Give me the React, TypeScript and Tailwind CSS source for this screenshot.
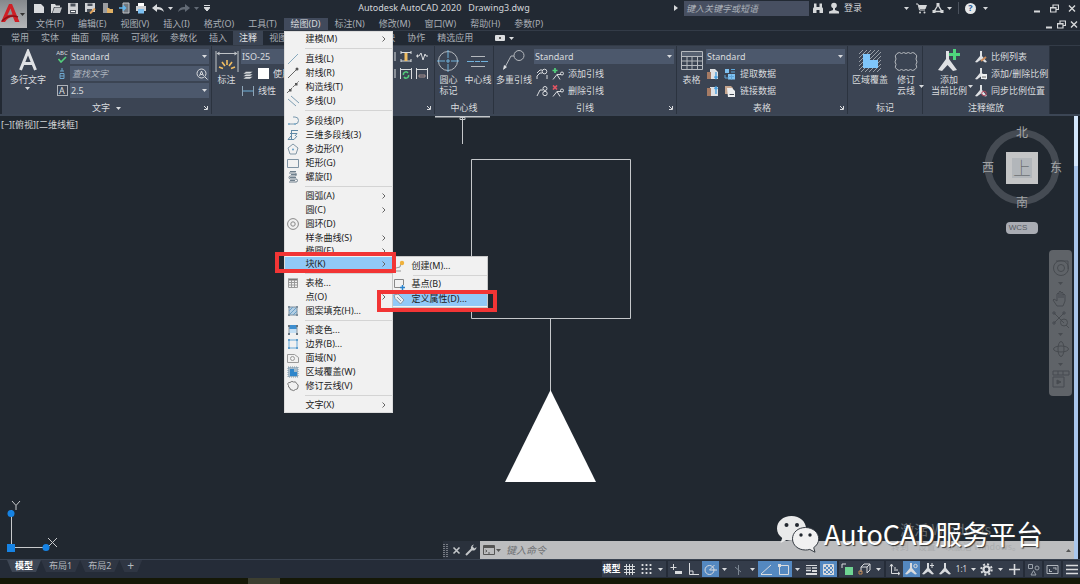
import { Fragment } from "react";
import type { ReactNode } from "react";

type IconProps = { w?: number; h?: number; children: ReactNode; className?: string };

function Icon({ w = 12, h = 12, children, className = "" }: IconProps) {
  return (
    <svg
      width={w}
      height={h}
      viewBox={`0 0 ${w} ${h}`}
      fill="none"
      stroke="currentColor"
      aria-hidden="true"
      className={`shrink-0 ${className}`}
    >
      {children}
    </svg>
  );
}

function Caret({ className = "" }: { className?: string }) {
  return (
    <Icon w={5} h={3} className={className}>
      <path d="M0 0h5L2.5 3z" fill="currentColor" stroke="none" />
    </Icon>
  );
}

/* ---------- Title bar ---------- */

const quickAccess: { label: string; icon: ReactNode }[] = [
  { label: "新建", icon: <path d="M1 2h7l3 3v6H1z" fill="#d9dbde" stroke="none" /> },
  {
    label: "打开",
    icon: (
      <>
        <path d="M1 2h4l1 1.500h4V5H4l-2 6H1z" fill="#d9dbde" stroke="none" />
        <path d="M4.500 5.500H12L10 11H2.500z" fill="#c2c5c9" stroke="none" />
      </>
    ),
  },
  {
    label: "保存",
    icon: (
      <>
        <path d="M1 1h10v11H1z" fill="#d0d2d5" stroke="none" />
        <path d="M3.500 1.500h5v3h-5zM3 8h6v3.500H3z" fill="#4c525c" stroke="none" />
        <path d="M4 9.500h4" stroke="#fff" />
      </>
    ),
  },
  {
    label: "另存为",
    icon: (
      <>
        <path d="M1 1h10v9H1z" fill="#d0d2d5" stroke="none" />
        <path d="M3.500 1.500h5v2.500h-5zM3 7h5v3H3z" fill="#4c525c" stroke="none" />
        <path d="M6 11.500l5-5" stroke="#e0a25a" strokeWidth="2" />
      </>
    ),
  },
  {
    label: "从 Web 打开",
    icon: (
      <>
        <path d="M2 1h5v10H2z" fill="#9b9da0" stroke="none" />
        <path d="M6 6h2l1 1h3v4H6z" fill="#e0b064" stroke="none" />
      </>
    ),
  },
  {
    label: "保存到移动设备",
    icon: (
      <>
        <path d="M5 1h6v10H5z" fill="#70777f" stroke="#c0c3c7" />
        <path d="M1 6h6M5 3.500L7.500 6 5 8.500" stroke="#5fb5ee" strokeWidth="1.500" />
      </>
    ),
  },
  {
    label: "打印",
    icon: (
      <>
        <path d="M3 1h6v3H3z" fill="#fff" stroke="none" />
        <path d="M1 4h10v5H1z" fill="#cfd1d4" stroke="none" />
        <path d="M3 7h6v4.500H3z" fill="#7cc0f2" stroke="none" />
      </>
    ),
  },
];

function WindowButtons({ className }: { className: string }) {
  return (
    <div className={`flex items-center text-[#d6d8da] ${className}`}>
      <button aria-label="最小化">
        <Icon w={8} h={9}>
          <path d="M1 7.500h6" strokeWidth="2" />
        </Icon>
      </button>
      <button aria-label="还原">
        <Icon w={9} h={9}>
          <path d="M3 3V1h5.500v4.500H6.500M.5 3.500h5.500V8H.5zM.5 4h5.500" strokeWidth="1.200" />
        </Icon>
      </button>
      <button aria-label="关闭">
        <Icon w={8} h={9}>
          <path d="M1 1.500l6 6M7 1.500l-6 6" strokeWidth="1.400" />
        </Icon>
      </button>
    </div>
  );
}

function TitleBar() {
  return (
    <div className="flex h-4 items-center pr-1">
      <div className="flex items-center gap-[5px] pl-1.5">
        {quickAccess.map((q) => (
          <button key={q.label} aria-label={q.label}>
            <Icon>{q.icon}</Icon>
          </button>
        ))}
        <button aria-label="放弃" className="flex items-center gap-1 text-[#d9dbde]">
          <Icon>
            <path d="M0 6l5-4v3c4 0 6 1 7 5-2-2-4-2.500-7-2.500V10z" fill="currentColor" stroke="none" />
          </Icon>
          <Caret />
        </button>
        <button aria-label="重做" className="flex items-center gap-1 text-[#626a75]">
          <Icon>
            <path d="M12 6L7 2v3C3 5 1 6 0 10c2-2 4-2.500 7-2.500V10z" fill="currentColor" stroke="none" />
          </Icon>
          <Caret />
        </button>
        <button aria-label="自定义快速访问工具栏" className="text-[#d9dbde]">
          <Icon w={6} h={6}>
            <path d="M0 .5h6M0 2.500h6L3 6z" fill="currentColor" />
          </Icon>
        </button>
      </div>

      <h1 className="flex-1 pl-1 text-center whitespace-pre text-[#d3d6d9]">
        Autodesk AutoCAD 2020{"   "}Drawing3.dwg
      </h1>

      <div className="flex items-center text-[#d6d8da]">
        <Icon w={4} h={6} className="mr-1.5">
          <path d="M0 0l4 3-4 3z" fill="currentColor" stroke="none" />
        </Icon>
        <input
          aria-label="搜索"
          placeholder="键入关键字或短语"
          className="h-[15px] w-[125px] bg-[#474f61] px-0.5 italic outline-none placeholder:text-[#aeb3bb]"
        />
        <button aria-label="查找" className="ml-[3px]">
          <Icon>
            <path d="M2 1.500h2.500V5h3V1.500H10V5l1 1.500V11H7.500V8h-3v3H1V6.500L2 5z" fill="currentColor" stroke="none" />
          </Icon>
        </button>
        <button className="ml-1 flex items-center gap-1">
          <Icon>
            <circle cx="6" cy="3.500" r="2.800" fill="currentColor" stroke="none" />
            <path d="M5 6h2v2l4 1.500V11.500H1V9.500L5 8z" fill="currentColor" stroke="none" />
          </Icon>
          登录
        </button>
        <Caret className="ml-[42px]" />
        <button aria-label="应用商店" className="ml-1.5">
          <Icon>
            <path d="M1 2h2l1.500 6H10" />
            <path d="M3.500 3H12l-1.500 4h-6z" fill="currentColor" stroke="none" />
            <circle cx="5" cy="10.500" r="1" fill="currentColor" stroke="none" />
            <circle cx="9.500" cy="10.500" r="1" fill="currentColor" stroke="none" />
          </Icon>
        </button>
        <button aria-label="Autodesk 360" className="ml-[5px] flex items-center gap-[3px]">
          <Icon>
            <path d="M6 3L2 9.500h8z" strokeWidth="1.400" />
            <path d="M4.500 1h3v3h-3zM.5 8h3v3h-3zM8.500 8h3v3h-3z" fill="currentColor" stroke="none" />
          </Icon>
          <Caret />
        </button>
        <span className="mx-1.5 h-3 w-px bg-[#4a515c]" />
        <button aria-label="帮助" className="flex items-center gap-[7px]">
          <span className="flex h-[11px] w-[11px] items-center justify-center rounded-full bg-[#e6e8ea] font-bold text-[#2c5f9c]">
            ?
          </span>
          <Caret />
        </button>
        <WindowButtons className="ml-[45px] gap-[9px]" />
      </div>
    </div>
  );
}

/* ---------- Draw menu ---------- */

type MenuItem = { label: string; icon?: ReactNode; sub?: boolean; clipped?: boolean; open?: boolean };

const corners = "M1 1h2v2H1zM9 1h2v2H9zM1 9h2v2H1zM9 9h2v2H9z";

const drawMenu: MenuItem[][] = [
  [{ label: "建模(M)", sub: true }],
  [
    { label: "直线(L)", icon: <path d="M1 11L11 1" stroke="#86a8bc" /> },
    {
      label: "射线(R)",
      icon: (
        <>
          <path d="M1 11L10 2" />
          <circle cx="10" cy="2" r="1.500" fill="#555" stroke="none" />
        </>
      ),
    },
    {
      label: "构造线(T)",
      icon: (
        <>
          <path d="M0 12L12 0" strokeDasharray="3 1" />
          <path d="M2 8h2.500v2.500H2zM8 2h2.500v2.500H8z" fill="#555" stroke="none" />
        </>
      ),
    },
    { label: "多线(U)", icon: <path d="M1 4l8 7M4 1l8 7" stroke="#7d9db2" /> },
  ],
  [
    {
      label: "多段线(P)",
      icon: (
        <>
          <path d="M6 2h2a3.500 3.500 0 010 7H1" stroke="#7898ae" />
          <path d="M1 8h2v2H1zM7 8h2v2H7z" fill="#8db4cc" stroke="none" />
        </>
      ),
    },
    { label: "三维多段线(3)", icon: <path d="M4 1.500h7M4.500 1v9M3 4.500h7L8 7M1 10.500h6L10 7M1 10.500L4 7" stroke="#5f88a5" /> },
    {
      label: "多边形(Y)",
      icon: (
        <>
          <path d="M6 1l5 4-2 6H3L1 5z" stroke="#8297a6" />
          <circle cx="6" cy="6.500" r="1" fill="#65a0c8" stroke="none" />
        </>
      ),
    },
    { label: "矩形(G)", icon: <path d="M.5 2.500h11v8H.5z" stroke="#7f93a3" /> },
    {
      label: "螺旋(I)",
      icon: (
        <path
          d="M2 2h6a1.500 1.500 0 010 3H3.500a1.500 1.500 0 000 3H9a1.500 1.500 0 010 3H2M3 .5h6M4 3.500h5M3 6.500h6M3 9.500h5"
          stroke="#6f7f8c"
        />
      ),
    },
  ],
  [
    { label: "圆弧(A)", sub: true },
    { label: "圆(C)", sub: true },
    {
      label: "圆环(D)",
      icon: (
        <>
          <circle cx="6" cy="6" r="5.400" stroke="#888" />
          <circle cx="6" cy="6" r="2.200" stroke="#888" />
        </>
      ),
    },
    { label: "样条曲线(S)", sub: true },
    { label: "椭圆(E)", sub: true, clipped: true },
    { label: "块(K)", sub: true, open: true },
  ],
  [
    {
      label: "表格...",
      icon: (
        <>
          <path d="M1 1.500h10v2H1z" fill="#777" stroke="none" />
          <path d="M1.500 2v8.500h9V2M1 5.500h10M1 8h10M4.500 3v8M7.500 3v8" stroke="#999" />
        </>
      ),
    },
    { label: "点(O)", sub: true },
    {
      label: "图案填充(H)...",
      icon: (
        <>
          <path d="M2 2h8v8H2z" fill="#b4cfe4" stroke="#7d8e9c" />
          <path d="M2 6l4-4M2 10l8-8M6 10l4-4" stroke="#6c9fc6" />
          <path d={corners} fill="#7d8e9c" stroke="none" />
        </>
      ),
    },
  ],
  [
    {
      label: "渐变色...",
      icon: (
        <>
          <path d="M2 1h8v4H2z" fill="#3f8fd0" stroke="none" />
          <path d="M2 5h8v4H2z" fill="#c3def3" stroke="none" />
          <path d="M2 1v10M10 1v10" stroke="#8c979f" />
          <path d={corners} fill="#66737e" stroke="none" />
        </>
      ),
    },
    {
      label: "边界(B)...",
      icon: (
        <>
          <path d="M2 2h8v8H2z" stroke="#64a7d8" />
          <path d={corners} fill="#5f9dcb" stroke="none" />
        </>
      ),
    },
    {
      label: "面域(N)",
      icon: (
        <>
          <path d="M.5 10.500v-8h7l4 3v5z" stroke="#999" />
          <circle cx="5.500" cy="6.500" r="2" stroke="#999" />
        </>
      ),
    },
    {
      label: "区域覆盖(W)",
      icon: (
        <>
          <path d="M1 1h10v10H1z" fill="#a3b9c9" stroke="#8296a5" strokeDasharray="1 1" />
          <path d="M3 3h4v3h3v4H3z" fill="#2f86cb" stroke="none" />
        </>
      ),
    },
    {
      label: "修订云线(V)",
      icon: (
        <path
          d="M1.500 5.500Q-.5 2.500 3 2.500 5 .5 6.500 2 9 1 9.500 3.500 12 4.500 11 7q0 2.500-2.500 2.500-2 2-3.500.5Q2.500 10 3 8 1 7.500 1.500 5.500z"
          stroke="#777"
        />
      ),
    },
  ],
  [{ label: "文字(X)", sub: true }],
];

function BlockSubmenu() {
  return (
    <ul className="absolute -top-px left-full w-24 border border-[#c9c9c9] bg-[#f1f1f1] pb-px">
      <li>
        <button className="flex h-[17px] w-full items-center gap-[7px]">
          <Icon>
            <path d="M2 11h6M3 8l4-1 1-4" stroke="#999" />
            <circle cx="9" cy="3" r="2.200" fill="#f0b23c" stroke="none" />
          </Icon>
          创建(M)...
        </button>
      </li>
      <li className="my-px ml-5 h-px bg-[#d4d4d4]" />
      <li>
        <button className="flex h-[14px] w-full items-center gap-[7px]">
          <Icon>
            <path d="M1.500 1.500h9V7M7 9.500H1.500v-8" stroke="#888" />
            <path d="M9.500 7v5M7 9.500h5" stroke="#2a82cc" strokeWidth="1.500" />
          </Icon>
          基点(B)
        </button>
      </li>
      <li className="relative">
        <button className="flex h-[15px] w-full items-center gap-[7px] bg-[#91c9f7]">
          <Icon>
            <path d="M1 2l4-1 6 6-3.500 4L2 5.500z" fill="#e9eef2" stroke="#8b98a3" />
            <path d="M4 4l4 4" stroke="#8b98a3" />
          </Icon>
          定义属性(D)...
        </button>
        <span className="pointer-events-none absolute -top-px -right-2.5 -bottom-1.5 -left-4 border-4 border-[#f23535]" />
      </li>
    </ul>
  );
}

function DrawMenu() {
  return (
    <ul className="absolute top-full left-0 z-20 mt-px w-[109px] border border-[#dcdcdc] bg-[#f1f1f1] text-left text-[#222]">
      {drawMenu.map((group, i) => (
        <Fragment key={group[0].label}>
          {i > 0 && <li className={`ml-5 h-px bg-[#d4d4d4] ${i < 3 ? "mt-0.5 mb-[3px]" : "my-0.5"}`} />}
          {group.map((item) => (
            <li key={item.label} className="relative">
              <button
                className={`flex w-full items-center gap-[7px] pr-1.5 pl-0.5 ${
                  item.clipped ? "h-3 overflow-hidden" : "h-[14px]"
                } ${item.open ? "bg-[#91c9f7]" : ""}`}
              >
                <Icon className="text-[#666]">{item.icon}</Icon>
                <span className="flex-1 text-left">{item.label}</span>
                {item.sub && (
                  <Icon w={4} h={6} className="text-[#666]">
                    <path d="M.5.5L3 3 .5 5.500" />
                  </Icon>
                )}
              </button>
              {item.open && (
                <>
                  <BlockSubmenu />
                  <span className="pointer-events-none absolute -top-[5px] -right-1 -bottom-0.5 -left-2.5 border-4 border-[#f23535]" />
                </>
              )}
            </li>
          ))}
        </Fragment>
      ))}
    </ul>
  );
}

const menus = [
  "文件(F)",
  "编辑(E)",
  "视图(V)",
  "插入(I)",
  "格式(O)",
  "工具(T)",
  "绘图(D)",
  "标注(N)",
  "修改(M)",
  "窗口(W)",
  "帮助(H)",
  "参数(P)",
];

function MenuBar() {
  return (
    <div className="flex h-[15px] items-stretch justify-between border-b border-[#333b47] pt-0.5 pr-0.5 pl-0.5 text-[#a9aeb5]">
      <nav className="flex">
        {menus.map((m) => (
          <div key={m} className="relative">
            <button className={`h-full px-[7px] ${m === "绘图(D)" ? "bg-[#414a5c] text-[#d9dbde]" : ""}`}>{m}</button>
            {m === "绘图(D)" && <DrawMenu />}
          </div>
        ))}
      </nav>
      <WindowButtons className="gap-1" />
    </div>
  );
}

/* ---------- Ribbon ---------- */

const tabs = [
  "常用",
  "实体",
  "曲面",
  "网格",
  "可视化",
  "参数化",
  "插入",
  "注释",
  "视图",
  "管理",
  "输出",
  "附加模块",
  "协作",
  "精选应用",
];

function RibbonTabs() {
  return (
    <nav className="flex h-[14px] items-stretch pl-[5px] text-[#a9aeb5]">
      {tabs.map((t) => (
        <button key={t} className={`px-1.5 ${t === "注释" ? "bg-[#3b4453] text-[#e3e5e8]" : ""}`}>
          {t}
        </button>
      ))}
      <button aria-label="显示选项" className="ml-4 flex items-center gap-1 text-[#dcdee0]">
        <Icon w={10} h={6}>
          <rect width="10" height="6" rx="1" fill="currentColor" stroke="none" />
          <circle cx="5" cy="3" r="1" fill="#333" stroke="none" />
        </Icon>
        <Caret />
      </button>
    </nav>
  );
}

type PanelProps = { title: string; className: string; caret?: boolean; launcher?: boolean; children: ReactNode };

function Panel({ title, className, caret, launcher, children }: PanelProps) {
  return (
    <section className={`flex shrink-0 flex-col border-r border-[#2b333f] bg-[#3b4453] ${className}`}>
      <div className="flex h-14 pt-[3px]">{children}</div>
      <h2 className="relative flex h-3 items-center justify-center gap-1.5">
        {title}
        {caret && <Caret />}
        {launcher && (
          <button aria-label={`${title}设置`} className="absolute right-[3px]">
            <Icon w={4} h={4}>
              <path d="M0 0l3 3M3.500 0v3.500H0" />
            </Icon>
          </button>
        )}
      </h2>
    </section>
  );
}

function BigButton({ icon, lines, caret }: { icon: ReactNode; lines: string[]; caret?: "below" | "side" }) {
  return (
    <button className="relative flex shrink-0 flex-col items-center self-start leading-[11px]">
      <Icon w={24} h={24} className="mb-px">
        {icon}
      </Icon>
      {lines.map((l) => (
        <span key={l}>{l}</span>
      ))}
      {caret === "below" && <Caret className="mt-0.5" />}
      {caret === "side" && <Caret className="absolute -right-1.5 bottom-2" />}
    </button>
  );
}

function Dropdown({ label, value, options = [] }: { label: string; value: string; options?: string[] }) {
  return (
    <div className="relative flex h-[15px] w-full items-center bg-[#4c586c]">
      <select aria-label={label} defaultValue={value} className="w-full appearance-none bg-transparent px-px outline-none">
        {[value, ...options].map((o) => (
          <option key={o}>{o}</option>
        ))}
      </select>
      <Caret className="pointer-events-none absolute right-0.5" />
    </div>
  );
}

const tableArt = (
  <>
    <path d="M1.500 2.500h21v18h-21zM1.500 7.500h21M1.500 12h21M1.500 16.500h21M7 7.500v13M12 7.500v13M17.500 7.500v13" stroke="#b5b9be" />
    <path d="M2 3h20v4H2z" fill="#566070" stroke="none" />
  </>
);

const scaleFigure = "M5 0h2v5l5 6-2 .5L6 8.500 2 11.500 0 11l5-6z";

function Ribbon() {
  return (
    <div className="flex h-[69px] overflow-hidden border-t border-[#333b47] pl-0.5 text-[#d9dbde]">
      <Panel title="文字" caret launcher className="w-[210px]">
        <div className="flex w-[52px] shrink-0 justify-center">
          <BigButton
            lines={["多行文字"]}
            caret="below"
            icon={<path d="M4.500 21L12 2.500 19.500 21M7.500 14.500h9" stroke="#dfe1e4" strokeWidth="3" />}
          />
        </div>
        <div className="flex w-4 shrink-0 flex-col gap-0.5">
          <button aria-label="拼写检查" className="h-[15px] text-[6px] leading-[5px]">
            <span className="block">ABC</span>
            <Icon w={10} h={7} className="mx-auto">
              <path d="M1.500 3l2.500 3 5-5" stroke="#53cf7b" strokeWidth="1.600" />
            </Icon>
          </button>
          <button aria-label="对正" className="flex h-[15px] items-center justify-center">
            <Icon>
              <path d="M6 0v3M4 3h4M4 5.500h4v5H4zM4 8h4" stroke="#6fa8cf" />
            </Icon>
          </button>
          <span className="mx-auto flex h-[15px] w-[11px] items-center justify-center">
            <span className="flex h-[11px] w-[11px] items-center justify-center border border-[#aeb2b8]">A</span>
          </span>
        </div>
        <div className="flex flex-1 flex-col gap-0.5 pr-0.5">
          <Dropdown label="文字样式" value="Standard" />
          <div className="flex h-[15px] items-center bg-[#4c586c] pr-px">
            <input
              aria-label="查找文字"
              placeholder="查找文字"
              className="w-full min-w-0 bg-transparent px-0.5 italic outline-none placeholder:text-[#adb3bc]"
            />
            <Icon>
              <circle cx="5.500" cy="5.500" r="4.500" />
              <path d="M3.500 8l2-5 2 5M4.500 6.500h2M9 9l2.500 2.500" />
            </Icon>
          </div>
          <Dropdown label="文字高度" value="2.5" options={["3.5", "5"]} />
        </div>
      </Panel>

      <Panel title="" launcher className="w-[223px]">
        <div className="flex w-[29px] shrink-0 justify-center">
          <BigButton
            lines={["标注"]}
            icon={
              <>
                <path d="M1 2v21M23 2v21M2 4.500h20" stroke="#bfc3c7" />
                <path d="M1.500 4.500l3-2v4zM22.500 4.500l-3-2v4z" fill="#bfc3c7" stroke="none" />
                <path d="M12 11v5M7 13l3 4M17 13l-3 4M4 18l4 1.500M20 18l-4 1.500" stroke="#f0bd62" strokeWidth="1.600" />
              </>
            }
          />
        </div>
        <div className="flex w-36 flex-col gap-0.5">
          <Dropdown label="标注样式" value="ISO-25" />
          <div className="flex h-[15px] items-center gap-1 pl-px whitespace-nowrap">
            <Icon>
              <path d="M1 8.500L4 6h7L8 8.500zM1 6l3-2.500h7L8 6zM1 11l3-2.500h7L8 11z" fill="#d9dbde" stroke="#3b4453" strokeWidth=".5" />
            </Icon>
            <span className="h-[11px] w-[11px] bg-white" />
            使用当前项
          </div>
          <button className="flex h-[15px] items-center gap-1 pl-px">
            <Icon>
              <path d="M.5 1v10M11.500 1v10" stroke="#8fa6b8" />
              <path d="M1 6h10" stroke="#6fb0da" />
            </Icon>
            线性
            <Caret className="ml-1" />
          </button>
        </div>
        <div className="ml-auto grid grid-cols-3 content-start gap-x-1 gap-y-0.5 pr-1.5">
          <Icon h={15}>
            <path d="M1 3v9M11 3v9" />
          </Icon>
          <Icon h={15}>
            <path d="M1 2v3M11 2v3M1 13v-3M11 13v-3M1 3.500h10M1 12h10" />
            <path d="M4.500 4h3v8h-3z" fill="#f0bd62" stroke="none" />
          </Icon>
          <Icon h={15}>
            <path d="M0 7h3M1.500 5.500v3M3 7l2-3 2 7 2-6 1 2h2" />
          </Icon>
          <Icon h={15}>
            <path d="M1 3v9M11 3v9" />
          </Icon>
          <Icon h={15}>
            <path d="M.5 2v11M11.500 2v11M1 3.500h10" />
            <path d="M3.500 9A2.500 2.500 0 018 7M8.500 9A2.500 2.500 0 014 11" stroke="#53cf7b" strokeWidth="1.500" />
          </Icon>
          <Icon h={15}>
            <path d="M.5 2v11M11.500 2v11M1 3.500h10" />
            <path d="M3 9h6v2H3z" stroke="#a58f8f" />
          </Icon>
        </div>
      </Panel>

      <Panel title="中心线" className="w-[59px]">
        <div className="flex w-full items-start justify-center gap-1">
          <BigButton
            lines={["圆心", "标记"]}
            icon={
              <>
                <circle cx="12" cy="12" r="9.500" stroke="#b5b9be" />
                <path d="M1 12h22M12 1v22" stroke="#71b2dc" strokeDasharray="8 1 4 1" />
              </>
            }
          />
          <BigButton
            lines={["中心线"]}
            icon={
              <>
                <path d="M5 7.500h14M5 17.500h14" stroke="#b5b9be" />
                <path d="M1 12.500h22" stroke="#71b2dc" strokeDasharray="7 1 5 1" />
              </>
            }
          />
        </div>
      </Panel>

      <Panel title="引线" launcher className="w-[183px]">
        <div className="flex w-10 shrink-0 justify-center">
          <BigButton
            lines={["多重引线"]}
            icon={
              <>
                <circle cx="17" cy="6.500" r="5" stroke="#b5b9be" />
                <path d="M12 7H9L2 20" stroke="#b5b9be" />
                <path d="M1 21l1-5 3 2z" fill="#dfe1e4" stroke="none" />
              </>
            }
          />
        </div>
        <div className="flex flex-1 flex-col gap-0.5 pr-0.5">
          <Dropdown label="多重引线样式" value="Standard" />
          <div className="flex h-[15px] items-center gap-1 pl-0.5">
            <Icon>
              <path d="M1 11V8l3-3h2M1 5l3-3h2M11 11V7" />
              <circle cx="8.500" cy="3.500" r="2.300" />
            </Icon>
            <button className="flex items-center gap-1">
              <Icon>
                <path d="M1 11.500l4-5h4M5 6.500l3 5" />
                <circle cx="10" cy="5.500" r="1.500" />
                <path d="M3 0v5M.5 2.500h5" stroke="#53cf7b" strokeWidth="1.700" />
              </Icon>
              添加引线
            </button>
          </div>
          <div className="flex h-[15px] items-center gap-1 pl-0.5">
            <Icon>
              <path d="M1 11l3-6h3" />
              <circle cx="9" cy="3.500" r="2" />
              <circle cx="9" cy="8.500" r="2.200" />
            </Icon>
            <button className="flex items-center gap-1">
              <Icon>
                <path d="M1 11.500l4-5h4M5 6.500l3 5" />
                <circle cx="10" cy="5.500" r="1.500" />
                <path d="M1 .5l4 4M5 .5l-4 4" stroke="#e25563" strokeWidth="1.700" />
              </Icon>
              删除引线
            </button>
          </div>
        </div>
      </Panel>

      <Panel title="表格" launcher className="w-[171px]">
        <div className="flex w-[29px] shrink-0 justify-center">
          <BigButton lines={["表格"]} icon={tableArt} />
        </div>
        <div className="flex flex-1 flex-col gap-0.5 pr-0.5">
          <Dropdown label="表格样式" value="Standard" />
          <div className="flex h-[15px] items-center gap-1 pl-px">
            <Icon>
              <path d="M3 1h5l3 3v7H3z" fill="#dfe1e4" stroke="none" />
              <path d="M0 4h4v7H0z" fill="#a67b64" stroke="none" />
              <path d="M9 4v6M7.500 8.500L9 10.500l1.500-2" stroke="#4aa0df" strokeWidth="1.400" />
            </Icon>
            <button className="flex items-center gap-1">
              <Icon className="ml-px">
                <path d="M1 1h4v4H1zM4 6h7v5.500H4z" fill="#7fc1f0" stroke="none" />
                <path d="M7 1.500h4M7 4h4M1 7v3h4M5 8.500h5M7.500 6.500v5" stroke="#5fa5d8" />
              </Icon>
              提取数据
            </button>
          </div>
          <div className="flex h-[15px] items-center gap-1 pl-px">
            <Icon>
              <path d="M3 2h8v9H3z" fill="#dfe1e4" stroke="none" />
              <path d="M0 3h4v8H0z" fill="#a67b64" stroke="none" />
              <path d="M9 9V2M7.500 4L9 2l1.500 2" stroke="#4aa0df" strokeWidth="1.400" />
            </Icon>
            <button className="flex items-center gap-1">
              <Icon className="ml-px">
                <path d="M1 1h6l2 2v6H1z" fill="#c5a58e" stroke="none" />
                <path d="M3 3h5l3 3v6H4z" fill="#eceeef" stroke="none" />
                <path d="M5.500 9.500h4.500" stroke="#444b56" />
              </Icon>
              链接数据
            </button>
          </div>
        </div>
      </Panel>

      <Panel title="标记" className="w-[75px]">
        <div className="flex w-full items-start justify-center gap-1.5">
          <BigButton
            lines={["区域覆盖"]}
            icon={
              <>
                <path
                  d="M1 5l4-4M1 9l8-8M1 13L13 1M1 17L17 1M1 21L21 1M3 23L23 3M7 23L23 7M11 23l12-12M15 23l8-8M19 23l4-4"
                  stroke="#999fa7"
                />
                <path d="M5 5h7v6h8v8H5z" fill="#7fc6fb" stroke="none" />
              </>
            }
          />
          <BigButton
            lines={["修订", "云线"]}
            caret="side"
            icon={
              <path
                d="M3 4.500q2.250-2 4.500 0 2.250-2 4.500 0 2.250-2 4.500 0 2.250-2 4.500 0 3 2 1 5.500 2 3 0 5.500 2 3-1 5-2.250 2-4.500 0-2.250 2-4.500 0-2.250 2-4.500 0-2.250 2-4.500 0-3-2-1-5-2-2.500 0-5.500-2-3.500 1-5.500z"
                stroke="#b5b9be"
              />
            }
          />
        </div>
      </Panel>

      <Panel title="注释缩放" className="w-[127px]">
        <div className="flex w-[52px] shrink-0 justify-center">
          <BigButton
            lines={["添加", "当前比例"]}
            caret="side"
            icon={
              <>
                <path d="M9 2h3v8l8 11-4 1-5.500-6L5 22l-4-1 8-11z" fill="#dfe1e4" stroke="none" />
                <path d="M17.500 0v11M12 5.500h11" stroke="#4fd47c" strokeWidth="3" />
              </>
            }
          />
        </div>
        <div className="flex flex-col gap-0.5">
          <button className="flex h-[15px] items-center gap-1">
            <Icon>
              <path d={scaleFigure} fill="#dfe1e4" stroke="none" />
              <path d="M6 10l5-4" stroke="#c98a5b" strokeWidth="2" />
            </Icon>
            比例列表
          </button>
          <button className="flex h-[15px] items-center gap-1">
            <Icon>
              <path d={scaleFigure} fill="#dfe1e4" stroke="none" />
              <path d="M6 6h6v5H6z" fill="#eceeef" stroke="none" />
              <path d="M7 9h4" stroke="#666" />
            </Icon>
            添加/删除比例
          </button>
          <button className="flex h-[15px] items-center gap-1">
            <Icon>
              <path d={scaleFigure} fill="#dfe1e4" stroke="none" />
              <circle cx="9" cy="8.500" r="2.300" stroke="#b5485f" />
            </Icon>
            同步比例位置
          </button>
        </div>
      </Panel>
    </div>
  );
}

/* ---------- Drawing area ---------- */

function ViewCube() {
  return (
    <div className="absolute top-[9px] right-[18px] flex w-20 flex-col items-center text-xs leading-3 text-[#a2a4a6]">
      <div className="relative flex h-[84px] w-full flex-col items-center justify-between">
        <svg viewBox="0 0 80 84" className="absolute inset-0" fill="none" aria-hidden="true">
          <circle cx="40" cy="42" r="34" stroke="#454b53" strokeWidth="7" />
        </svg>
        <span className="relative pt-0.5">北</span>
        <div className="relative flex w-full items-center justify-between">
          <span>西</span>
          <button className="flex h-8 w-8 items-center justify-center border-[6px] border-[#c4c5c6] bg-[#b2b6ba] text-lg leading-5 font-thin text-[#4c5054]">
            上
          </button>
          <span>东</span>
        </div>
        <span className="relative">南</span>
      </div>
      <button className="mt-[13px] h-3 w-8 rounded-sm bg-[#a9acb3] pr-2 font-['Liberation_Sans',sans-serif] text-[8px] leading-3 text-[#555a61]">
        WCS
      </button>
    </div>
  );
}

function NavBar() {
  return (
    <div className="absolute top-[134px] right-2 flex h-[146px] w-[23px] flex-col items-center justify-between rounded-sm bg-[#5f6368] py-2 text-[#474b50]">
      <button aria-label="控制盘">
        <Icon w={18} h={20}>
          <circle cx="9" cy="10" r="7.500" />
          <circle cx="9" cy="10" r="3.500" />
          <path d="M4 3h12v8" />
        </Icon>
      </button>
      <Caret />
      <button aria-label="平移">
        <Icon w={18} h={17}>
          <path d="M5 16l-4-6 1-1 3 2V4l1-1 1 1V2l1-1 1 1v1l1-1 1 1v2l1-1 1 1v6l-2 5z" />
          <path d="M7 4v4M9 3v5M11 4v4" />
        </Icon>
      </button>
      <button aria-label="缩放">
        <Icon w={18} h={18}>
          <path d="M2 2l10 10M2 12L12 2M1 1h2v2H1zM11 1h2v2h-2zM1 11h2v2H1zM14 14l3 3" />
          <circle cx="12" cy="11.500" r="3.500" />
        </Icon>
      </button>
      <Caret />
      <button aria-label="动态观察">
        <Icon w={18} h={18}>
          <ellipse cx="9" cy="9" rx="7.500" ry="3" />
          <ellipse cx="9" cy="9" rx="3" ry="7.500" />
        </Icon>
      </button>
      <Caret />
      <button aria-label="ShowMotion">
        <Icon w={18} h={18}>
          <path d="M1 1h16v4H1zM1 7h11v10H1zM6 1v4M11 1v4" />
          <path d="M5 10l4 2-4 2z" fill="currentColor" />
        </Icon>
      </button>
    </div>
  );
}

function UcsIcon() {
  return (
    <svg width="60" height="56" className="absolute bottom-[3px] left-1" fill="none" stroke="#c8cacc" aria-hidden="true">
      <path d="M7.500 10v37.500H43M8 1l4 4.500L16 1M12 5.500V10M44 38l9 9M53 38l-9 9" />
      <circle cx="7" cy="13.500" r="3.500" fill="#1683e4" stroke="none" />
      <circle cx="42" cy="47.500" r="3.500" fill="#1683e4" stroke="none" />
      <path d="M3 44h8v8H3z" fill="#1683e4" stroke="none" />
    </svg>
  );
}

function CommandLine() {
  return (
    <div className="absolute right-1.5 bottom-0 left-[443px] flex h-[18px] items-stretch">
      <div className="flex w-[37px] items-center gap-1 bg-[#2a313c] text-[#c4c7ca]">
        <Icon w={5} h={13}>
          <path d="M1 0v13M4 0v13" strokeDasharray="1 1" />
        </Icon>
        <button aria-label="关闭命令行">
          <Icon w={9} h={9}>
            <path d="M1.500 1.500l6 6M7.500 1.500l-6 6" strokeWidth="1.600" />
          </Icon>
        </button>
        <button aria-label="自定义">
          <Icon>
            <path d="M1 11l6-6" strokeWidth="2" />
            <path d="M11.500 3L9.500 4.500 7.500 2.500 9 .5a3.500 3.500 0 00-3 4.500l1.500 1.500a3.500 3.500 0 004-3.500z" fill="currentColor" stroke="none" />
          </Icon>
        </button>
      </div>
      <label className="flex flex-1 items-center bg-[#bcbdbf] px-[3px] text-[#555]">
        <Icon>
          <path d="M.5 1.500h11v9H.5z" />
          <path d="M1 2h10v2H1z" fill="currentColor" stroke="none" />
          <path d="M2.500 6l1.500 1-1.500 1M5 9h2" />
        </Icon>
        <Caret className="mr-1 ml-px" />
        <input
          aria-label="命令"
          placeholder="键入命令"
          className="flex-1 bg-transparent px-px text-[10px] italic outline-none placeholder:text-[#6d6f72]"
        />
        <Icon w={5} h={3}>
          <path d="M0 3h5L2.500 0z" fill="currentColor" stroke="none" />
        </Icon>
      </label>
    </div>
  );
}

function Watermark() {
  return (
    <div className="pointer-events-none absolute right-[37px] bottom-1.5 flex items-center gap-1 font-['Noto_Sans_CJK_SC',sans-serif]">
      <p className="absolute top-1.5 right-[52px] text-sm leading-4 whitespace-nowrap text-[#63686d]">激活 Windows</p>
      <p className="absolute right-[22px] bottom-0 whitespace-nowrap text-[#aaacae]">转到“设置”以激活 Windows。</p>
      <svg width="44" height="38" viewBox="0 0 44 38" className="relative" aria-hidden="true">
        <path d="M15.500 1C7 1 1 6.500 1 13.500c0 4 2 7.200 5.200 9.500L4.500 28l6-3c1.600.5 3.300.8 5 .8 8 0 14.500-5.500 14.500-12.300S24 1 15.500 1z" fill="#e9eaea" />
        <path
          d="M29.500 12.500C22 12.500 16.500 17.500 16.500 23.800S22 35 29.500 35c1.500 0 3-.2 4.300-.6l5.200 2.800-1.300-4.600c3-2 5-5 5-8.800 0-6.300-5.700-11.300-13.200-11.300z"
          fill="#f1f1f1"
          stroke="#343a42"
        />
        <circle cx="10.500" cy="10" r="2" fill="#22282f" />
        <circle cx="21" cy="10" r="2" fill="#22282f" />
        <circle cx="25" cy="20" r="1.700" fill="#22282f" />
        <circle cx="34" cy="20" r="1.700" fill="#22282f" />
      </svg>
      <p className="relative text-[27px] leading-9 text-white [text-shadow:1px_1px_1px_#333]">AutoCAD服务平台</p>
    </div>
  );
}

function Canvas() {
  return (
    <main className="relative flex-1 overflow-hidden border-t-2 border-[#3c4655] bg-[#212830]">
      <p className="px-px pt-0.5 leading-[14px] text-[#d3d5d7]">[−][俯视][二维线框]</p>
      <svg className="absolute inset-0 h-full w-full" fill="none" stroke="#c5c8cb" aria-hidden="true">
        <path d="M435 .5h55" strokeWidth="2" />
        <path d="M462.500 2v26M460 1.500h5v2h-5z" />
        <path d="M471.500 43.500h159v159h-159zM550.500 203v72" />
        <path d="M550.500 274L596 366H505z" fill="#fff" stroke="none" />
      </svg>
      <ViewCube />
      <NavBar />
      <UcsIcon />
      <div className="absolute inset-y-0 right-0 w-1.5 border-r-2 border-[#161c24] bg-[#a9c6ec]">
        <div className="h-[50px] bg-[#d3e6fb]" />
      </div>
      <CommandLine />
      <Watermark />
    </main>
  );
}

/* ---------- Status bar ---------- */

type StatusItem = { label: string; icon: ReactNode; on?: boolean; caret?: boolean; gap?: boolean };

const statusItems: StatusItem[] = [
  { label: "栅格", icon: <path d="M3.500 1v11M6.500 1v11M9.500 1v11M1 3.500h11M1 6.500h11M1 9.500h11" /> },
  {
    label: "捕捉模式",
    caret: true,
    icon: <path d="M2.500 1v12M6.500 1v12M10.500 1v12" strokeWidth="1.800" strokeDasharray="2 2" />,
  },
  {
    label: "动态输入",
    gap: true,
    icon: (
      <>
        <path d="M3.500 1v6M.5 4.500h6" />
        <path d="M5 8h7v3H5z" fill="currentColor" stroke="none" />
      </>
    ),
  },
  { label: "正交", icon: <path d="M2.500 0v11.500H12M2.500 8H6v3.500" /> },
  {
    label: "极轴追踪",
    on: true,
    caret: true,
    icon: (
      <>
        <circle cx="5.500" cy="7" r="4.500" />
        <path d="M5.500 7l5-5M5.500 7H13" />
      </>
    ),
  },
  { label: "等轴测草图", caret: true, icon: <path d="M6.500 2v10M3 4l6 5" stroke="#7d8793" /> },
  { label: "对象捕捉追踪", on: true, icon: <path d="M1 11.500h11M1 11L11 2" /> },
  {
    label: "对象捕捉",
    on: true,
    caret: true,
    icon: (
      <>
        <path d="M2.500 2.500h9v9h-9z" />
        <path d="M1 1h3v3H1z" fill="currentColor" stroke="none" />
      </>
    ),
  },
  {
    label: "线宽",
    icon: (
      <>
        <path d="M1 2.500h11M1 5h5" />
        <path d="M7 5h5M1 7.500h5" strokeWidth="1.500" />
        <path d="M7 8h5M1 11h11" strokeWidth="2" />
      </>
    ),
  },
  {
    label: "透明度",
    on: true,
    icon: (
      <>
        <path d="M1.500 1.500h10v10h-10z" />
        <path d="M2 3h10M2 7h10M2 11h10" strokeWidth="2" strokeDasharray="2 2" />
        <path d="M4 5h8M4 9h8" strokeWidth="2" strokeDasharray="2 2" />
      </>
    ),
  },
  {
    label: "选择循环",
    gap: true,
    icon: (
      <>
        <path d="M4 4h8v8H4z" fill="#6fd493" stroke="none" />
        <path d="M1 5V1h4" />
      </>
    ),
  },
  {
    label: "三维对象捕捉",
    caret: true,
    icon: (
      <>
        <path d="M3 4l3-3h6v6l-3 3M3 4h6v6M9 4l3-3M3 4v5" />
        <path d="M1 8h3v3H1z" stroke="#c08855" />
      </>
    ),
  },
  { label: "动态 UCS", gap: true, icon: <path d="M3.500 2v8.500H11M2 3.500L3.500 1 5 3.500M10 9l2 1.500-2 1.500M7 4v4M9 6v2" /> },
  {
    label: "注释可见性",
    on: true,
    icon: (
      <>
        <path d={scaleFigure} fill="currentColor" stroke="none" />
        <circle cx="10.500" cy="3" r="1.700" />
      </>
    ),
  },
  {
    label: "自动缩放",
    icon: (
      <>
        <path d={scaleFigure} fill="currentColor" stroke="none" />
        <path d="M10 0v5M8 2.500h4" />
      </>
    ),
  },
  { label: "注释比例", icon: <path d={scaleFigure} fill="currentColor" stroke="none" /> },
];

const statusTail: StatusItem[] = [
  {
    label: "切换工作空间",
    caret: true,
    icon: (
      <>
        <circle cx="6.500" cy="6.500" r="3" strokeWidth="2.200" />
        <circle cx="6.500" cy="6.500" r="5.200" strokeWidth="2" strokeDasharray="2 2.080" />
      </>
    ),
  },
  { label: "注释监视器", icon: <path d="M6.500 1v11M1 6.500h11" strokeWidth="1.600" /> },
  {
    label: "隔离对象",
    gap: true,
    icon: (
      <>
        <path d="M1.500 1.500h4v4h-4zM4 12l2.500-4.500L9 12z" stroke="#9aa1aa" />
        <circle cx="10" cy="5" r="2" stroke="#9aa1aa" />
      </>
    ),
  },
  {
    label: "全屏显示",
    gap: true,
    icon: <path d="M1 2.500h11v8H1zM7 5h3M10 4.500V7M3 8.500h3M3.500 6v3" stroke="#b0b5bc" />,
  },
  { label: "自定义", gap: true, icon: <path d="M1 2.500h12M1 6.500h12M1 10.500h12" strokeWidth="1.400" /> },
];

function StatusButton({ item }: { item: StatusItem }) {
  return (
    <>
      <button
        aria-label={item.label}
        className={`flex w-[17px] items-center justify-center ${item.gap ? "ml-0.5" : ""} ${
          item.on ? "bg-[#5488c0]" : "bg-[#343c4a]"
        }`}
      >
        <Icon w={13} h={13}>
          {item.icon}
        </Icon>
      </button>
      {item.caret && (
        <button aria-label={`${item.label}选项`} className="flex w-[11px] items-center justify-center bg-[#343c4a]">
          <Caret />
        </button>
      )}
    </>
  );
}

const tabShape = "h-3 px-2 [clip-path:polygon(0_0,100%_0,calc(100%-5px)_100%,5px_100%)]";

function StatusBar() {
  return (
    <footer className="bg-[#252c38]">
      <div className="flex h-[19px] border-t border-[#3a4351]">
        <div className="flex items-start pl-[7px] text-[#b4b8bd]">
          <button className={`${tabShape} bg-[#3e4654] font-bold text-white`}>模型</button>
          <button className={`${tabShape} bg-[#2f3643]`}>布局1</button>
          <button className={`${tabShape} bg-[#2f3643]`}>布局2</button>
          <button aria-label="新建布局" className={`${tabShape} bg-[#2f3643] text-xs leading-3`}>
            +
          </button>
        </div>
        <div className="ml-auto flex py-px text-[#d9dbde]">
          <button className="w-[19px] bg-[#343c4a] font-bold whitespace-nowrap text-white">模型</button>
          {statusItems.map((s) => (
            <StatusButton key={s.label} item={s} />
          ))}
          <button className="flex w-6 items-center justify-center gap-1 bg-[#343c4a] text-[8px]">
            1:1
            <Caret />
          </button>
          {statusTail.map((s) => (
            <StatusButton key={s.label} item={s} />
          ))}
        </div>
      </div>
      {/* Edge of the desktop taskbar */}
      <div className="h-1.5 bg-[#151807] pl-[248px]">
        <div className="h-full w-8 bg-[#3c3e30]" />
      </div>
    </footer>
  );
}

export default function App() {
  return (
    <div className="flex min-h-screen flex-col bg-[#222933] font-['Noto_Sans','Noto_Sans_CJK_SC',sans-serif] text-[9px] leading-3">
      <header>
        <div className="flex">
          <button
            aria-label="应用程序菜单"
            className="flex h-7 w-[27px] shrink-0 items-center bg-linear-to-b from-[#85888c] to-[#b5b7b9]"
          >
            <Icon w={20} h={24}>
              <path d="M1 20L9 2h3l7.500 18h-4.500l-2-5q-5 0-8 5z" fill="#cf2027" stroke="none" />
              <path d="M7.500 13L10.500 6.500l2 6z" fill="#8f9296" stroke="none" />
              <path d="M2 19q7-7 16-4" stroke="#8d1218" strokeWidth="1.500" />
            </Icon>
            <Caret className="text-[#333]" />
          </button>
          <div className="min-w-0 flex-1">
            <TitleBar />
            <MenuBar />
          </div>
        </div>
        <RibbonTabs />
        <Ribbon />
      </header>
      <Canvas />
      <StatusBar />
    </div>
  );
}
